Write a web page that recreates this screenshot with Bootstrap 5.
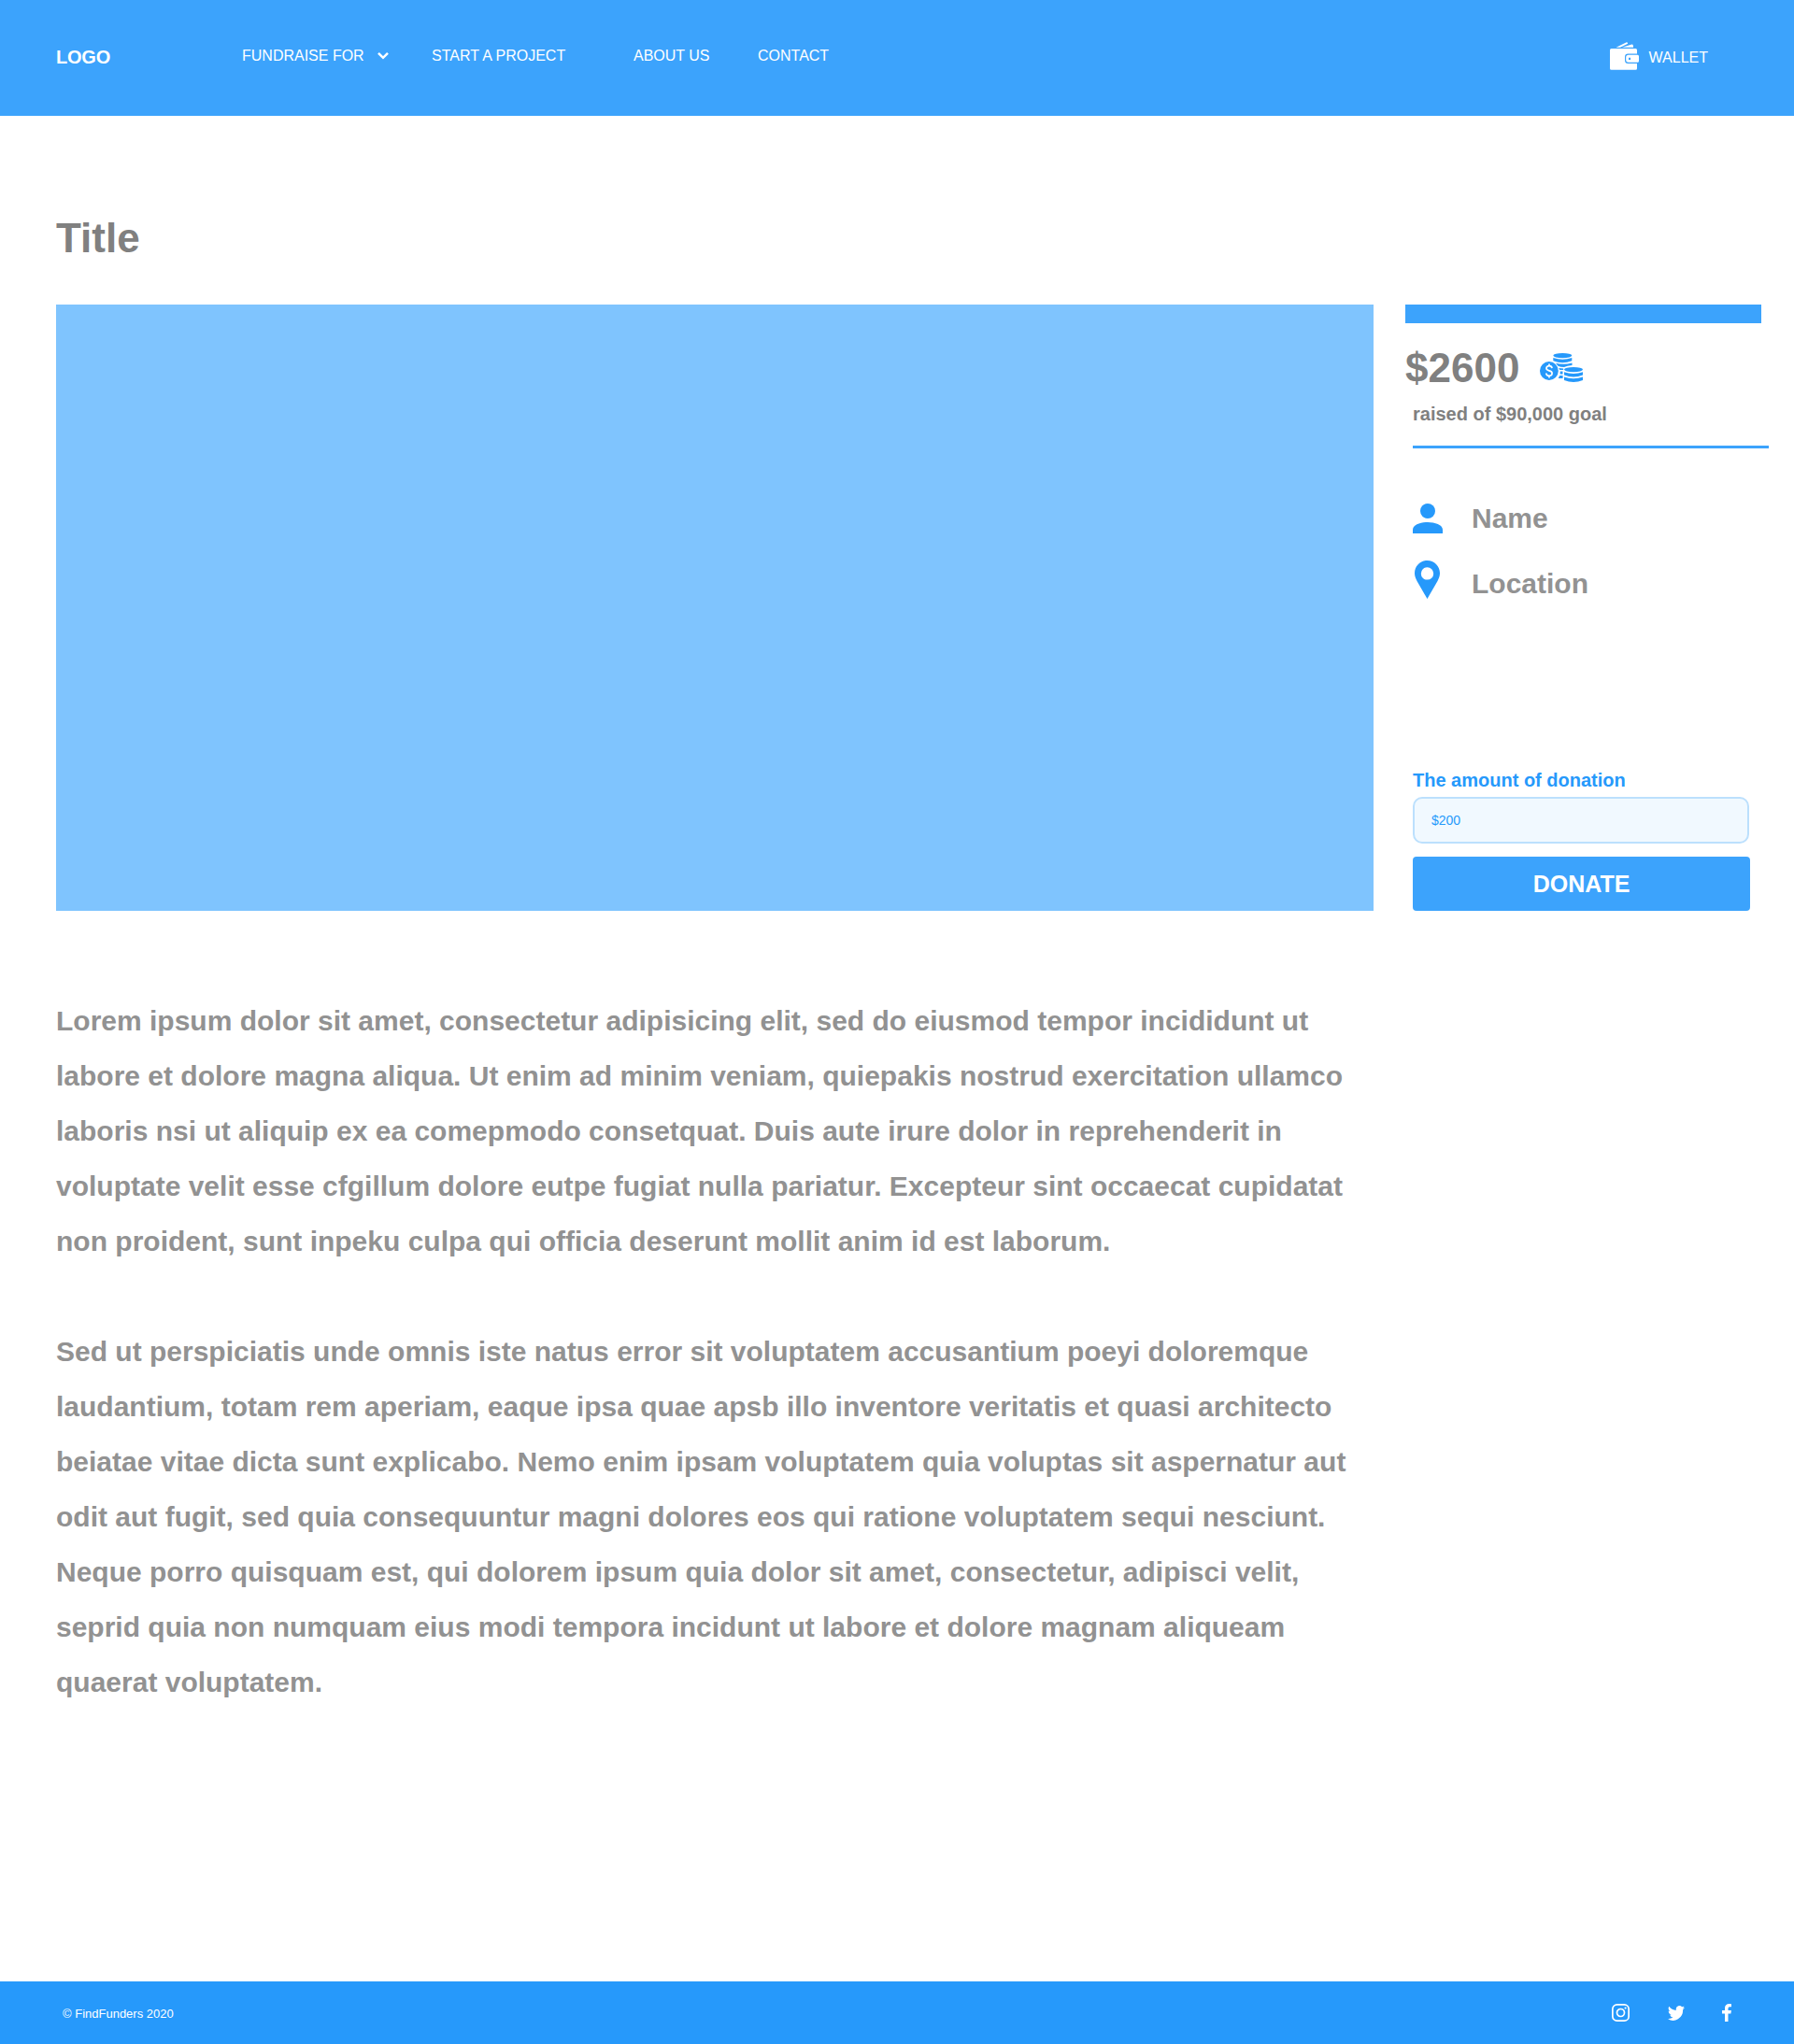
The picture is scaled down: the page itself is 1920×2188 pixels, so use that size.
<!DOCTYPE html>
<html lang="en">
<head>
<meta charset="utf-8">
<meta name="viewport" content="width=device-width, initial-scale=1">
<title>FindFunders</title>
<link href="https://cdn.jsdelivr.net/npm/bootstrap@5.3.0/dist/css/bootstrap.min.css" rel="stylesheet">
<style>
  body { font-family: "Liberation Sans", Arial, sans-serif; color: #808080; min-height: 2188px; }
  svg { display: block; flex: none; }
  .site-header { height: 124px; background: #3ca3fc; padding: 0 92px 0 60px; }
  .site-header a { color: #fff; text-decoration: none; font-size: 16px; line-height: 20px; white-space: nowrap; }
  .site-header .brand { font-size: 20px; line-height: 24px; letter-spacing: -.2px; width: 199px; margin-top: 49px; }
  .main-nav { margin-top: 50px; }
  .main-nav .nav-fund { width: 203px; gap: 14.5px; }
  .main-nav .nav-start { width: 216px; }
  .main-nav .nav-about { width: 133px; }
  .wallet-link { margin-top: 45px; gap: 11px; }
  .wallet-link span { padding-top: 3px; }
  .page-main { padding: 103px 27px 0 60px; }
  .page-title { font-size: 44px; line-height: 56px; margin-bottom: 43px; }
  .hero-box { width: 1410px; height: 649px; background: #7fc4fe; }
  .side-panel { width: 389px; height: 649px; margin-left: 34px; }
  .goal-bar { width: 381px; height: 20px; background: #3ca3fc; }
  .raised-sum { font-size: 44px; line-height: 56px; margin-top: 20px; gap: 21.5px; }
  .raised-sum svg { margin-top: 12px; }
  .side-inner { margin-left: 8px; }
  .label-text { font-size: 20px; line-height: 24px; }
  .raised-goal { margin-top: 9px; }
  .rule-line { height: 3px; background: #3ca3fc; margin: 22px 0 40px; }
  .info-row { height: 70px; flex: none; color: #929292; font-size: 30px; line-height: 40px; }
  .info-row .info-icon { width: 63px; }
  .donate-form { width: 361px; color: #2699fb; }
  .amount-input { width: 360px; height: 50px; border: 2px solid #bce0fd; border-radius: 10px; background: #f1f9ff; color: #2699fb; font-size: 14px; padding: 0 18px; margin-top: 6px; }
  .donate-btn { height: 58px; border: 0; border-radius: 4px; background: #3ca3fc; color: #fff; font-size: 25px; line-height: 58px; padding: 0; margin-top: 14px; }
  .donate-btn:hover { background: #2699fb; color: #fff; }
  .story { margin-top: 88px; color: #929292; font-size: 30px; line-height: 59px; white-space: nowrap; }
  .story p { margin: 0 0 59px; }
  .site-footer { height: 67px; background: #2699fb; color: #fff; font-size: 13px; padding: 0 67px; }
  .site-footer span { padding-top: 2px; }
  .social-links { gap: 40px; }
  .social-links .ig-icon { margin-right: 1px; }
</style>
</head>
<body class="d-flex flex-column bg-white">
  <header class="site-header d-flex align-items-start">
    <a href="#" class="brand fw-bold">LOGO</a>
    <nav class="main-nav d-flex">
      <a href="#" class="nav-fund d-flex">FUNDRAISE FOR
        <svg width="12" height="20" viewBox="0 0 12 20"><path d="M1 6.800 L6 11.800 L11 6.800" fill="none" stroke="#fff" stroke-width="2.500"/></svg>
      </a>
      <a href="#" class="nav-start">START A PROJECT</a>
      <a href="#" class="nav-about">ABOUT US</a>
      <a href="#">CONTACT</a>
    </nav>
    <a href="#" class="wallet-link d-flex align-items-center ms-auto">
      <svg width="31" height="30" viewBox="0 0 31 30" fill="#fff"><path d="M6.500 5.800 L17.800 .2 Q18.600 0 18.900 .8 L19.100 1.800 L11 5.800Z M13 5.800 L23.400 2.600 Q24.500 2.400 24.800 3.400 L25.100 5.800Z"/><path d="M1.500 7 H27.500 Q29 7 29 8.500 V12.600 H19.500 Q16 12.600 16 16 V19.500 Q16 23 19.500 23 H29 V28.200 Q29 29.700 27.500 29.700 H1.500 Q0 29.700 0 28.200 V8.500 Q0 7 1.500 7Z"/><path fill-rule="evenodd" d="M20 13.800 H29.500 Q31 13.800 31 15.300 V20.300 Q31 21.800 29.500 21.800 H20 Q17.200 21.800 17.200 19 V16.600 Q17.200 13.800 20 13.800Z M20 16.800 V18.900 H22.100 V16.800Z"/></svg>
      <span>WALLET</span>
    </a>
  </header>

  <main class="page-main flex-grow-1">
    <h1 class="page-title fw-bold">Title</h1>
    <div class="d-flex">
      <div class="hero-box"></div>
      <aside class="side-panel d-flex flex-column">
        <div class="goal-bar"></div>
        <div class="raised-sum d-flex fw-bold">
          <span>$2600</span>
          <svg width="47" height="32" viewBox="0 0 47 32" fill="#2699fb">
            <path d="M14.300 2.600 A10 2.600 0 0 1 34.300 2.600 A10 2.600 0 0 1 14.300 2.600Z"/>
            <path d="M14.300 5 Q24.300 8.400 34.300 5 V8.300 Q24.300 12.300 14.300 8.300Z M17 10.800 Q25.500 13 34.500 10.600 V13 Q29 13.500 26 15 Q22 15 19.400 13.700Z M20.200 16 L25.200 16.400 V18 H21.300Z M21.700 19.600 H24.500 V22.400 H21.700Z M21.200 24 H24.600 V27 H19.800Z"/>
            <circle cx="9.900" cy="19" r="9.900"/>
            <path d="M13 16.200 C12.800 14.400 11.500 13.700 10 13.700 C8.200 13.700 7 14.700 7 16.300 C7 20 13.100 17.800 13.100 21.600 C13.100 23.300 11.700 24.300 10 24.300 C8.200 24.300 6.900 23.300 6.800 21.500 M10 11.500 V14 M10 24 V26.500" fill="none" stroke="#fff" stroke-width="1.700"/>
            <path d="M26 17.600 A10 2.600 0 0 1 46 17.600 A10 2.600 0 0 1 26 17.600Z M26 20.200 Q36 23.800 46 20.200 V23.500 Q36 27.500 26 23.500Z M26 25.500 Q36 29 46 25.500 V29 Q36 33 26 29Z"/>
          </svg>
        </div>
        <div class="side-inner d-flex flex-column flex-grow-1">
          <div class="label-text raised-goal fw-bold">raised of $90,000 goal</div>
          <div class="rule-line"></div>
          <div class="info-row d-flex align-items-center fw-bold">
            <span class="info-icon"><svg width="32" height="32" viewBox="0 7 32 32" fill="#2699fb"><circle cx="16" cy="15" r="8"/><path d="M0 39 V35 C0 29.700 8.500 27 16 27 S32 29.700 32 35 V39Z"/></svg></span>
            <span>Name</span>
          </div>
          <div class="info-row d-flex align-items-center fw-bold">
            <span class="info-icon"><svg width="32" height="50" viewBox="0 0 32 50" fill="#2699fb"><path fill-rule="evenodd" d="M15.500 0 C8 0 2 6 2 13.600 C2 16.500 3 19.200 4.500 22 L15.500 41 L26.500 22 C28 19.200 29 16.500 29 13.600 C29 6 23 0 15.500 0Z M15.500 7.200 A6.700 6.700 0 1 1 15.500 20.600 A6.700 6.700 0 1 1 15.500 7.200Z"/></svg></span>
            <span>Location</span>
          </div>
          <form class="donate-form d-flex flex-column mt-auto">
            <label class="label-text fw-bold" for="amount">The amount of donation</label>
            <input id="amount" type="text" class="amount-input" value="$200">
            <button type="button" class="btn donate-btn fw-bold">DONATE</button>
          </form>
        </div>
      </aside>
    </div>
    <section class="story fw-bold">
      <p>Lorem ipsum dolor sit amet, consectetur adipisicing elit, sed do eiusmod tempor incididunt ut<br>
      labore et dolore magna aliqua. Ut enim ad minim veniam, quiepakis nostrud exercitation ullamco<br>
      laboris nsi ut aliquip ex ea comepmodo consetquat. Duis aute irure dolor in reprehenderit in<br>
      voluptate velit esse cfgillum dolore eutpe fugiat nulla pariatur. Excepteur sint occaecat cupidatat<br>
      non proident, sunt inpeku culpa qui officia deserunt mollit anim id est laborum.</p>
      <p>Sed ut perspiciatis unde omnis iste natus error sit voluptatem accusantium poeyi doloremque<br>
      laudantium, totam rem aperiam, eaque ipsa quae apsb illo inventore veritatis et quasi architecto<br>
      beiatae vitae dicta sunt explicabo. Nemo enim ipsam voluptatem quia voluptas sit aspernatur aut<br>
      odit aut fugit, sed quia consequuntur magni dolores eos qui ratione voluptatem sequi nesciunt.<br>
      Neque porro quisquam est, qui dolorem ipsum quia dolor sit amet, consectetur, adipisci velit,<br>
      seprid quia non numquam eius modi tempora incidunt ut labore et dolore magnam aliqueam<br>
      quaerat voluptatem.</p>
    </section>
  </main>

  <footer class="site-footer d-flex align-items-center justify-content-between">
    <span>© FindFunders 2020</span>
    <div class="social-links d-flex align-items-center">
      <svg class="ig-icon" width="19" height="19" viewBox="0 0 19 19" fill="none" stroke="#fff" stroke-width="1.700"><rect x=".85" y=".85" width="17.300" height="17.300" rx="4.700"/><circle cx="9.500" cy="9.500" r="4"/><circle cx="14.600" cy="4.500" r="1.100" fill="#fff" stroke="none"/></svg>
      <svg width="18" height="16" viewBox="0 0 24 20" preserveAspectRatio="none" fill="#fff"><path d="M24 2.400a9.800 9.800 0 0 1-2.800.8A4.900 4.900 0 0 0 23.300 .5a9.900 9.900 0 0 1-3.100 1.200A4.900 4.900 0 0 0 11.800 6.200 14 14 0 0 1 1.700 1a4.900 4.900 0 0 0 1.500 6.600 4.900 4.900 0 0 1-2.200-.6v.1a4.900 4.900 0 0 0 3.900 4.800 4.900 4.900 0 0 1-2.200.1 4.900 4.900 0 0 0 4.600 3.400A9.900 9.900 0 0 1 0 17.500 14 14 0 0 0 21.500 5.100 10 10 0 0 0 24 2.400Z"/></svg>
      <svg width="10" height="19" viewBox="0 0 10 19" fill="#fff"><path d="M6.500 19V10.500H9.400L9.900 7H6.500V5.200C6.500 4.100 6.900 3.300 8.300 3.300H10V.2C9.600.1 8.600 0 7.600 0 4.900 0 3 1.600 3 4.600V7H0V10.500H3V19Z"/></svg>
    </div>
  </footer>
<script src="https://cdn.jsdelivr.net/npm/bootstrap@5.3.0/dist/js/bootstrap.bundle.min.js"></script>
</body>
</html>
